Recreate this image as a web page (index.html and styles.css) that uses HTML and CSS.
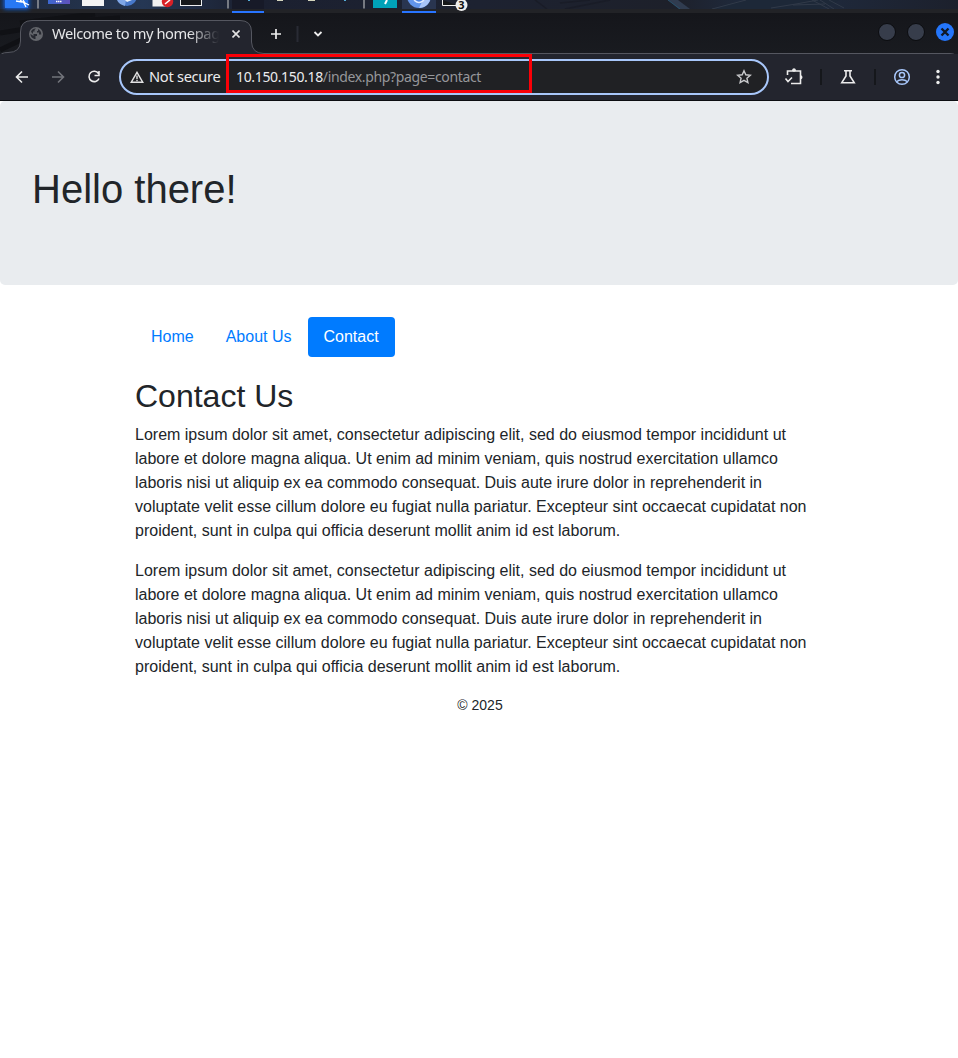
FILE: index.html
```
<!DOCTYPE html>
<html lang="en">
<head>
<meta charset="utf-8">
<title>Welcome to my homepage</title>
<link rel="stylesheet" href="styles.css">
</head>
<body>
<div class="screen">
  <header class="browser">
    <svg class="panel" width="958" height="13" viewBox="0 0 958 13">
      <defs>
        <linearGradient id="sky" x1="0" x2="1"><stop offset="0" stop-color="#202a3d"/><stop offset=".15" stop-color="#253754"/><stop offset=".26" stop-color="#1b2030"/><stop offset=".5" stop-color="#1d2231"/><stop offset=".7" stop-color="#1d202a"/><stop offset=".8" stop-color="#202d42"/><stop offset="1" stop-color="#1c202c"/></linearGradient>
        <linearGradient id="violet" x1="0" x2="1"><stop offset="0" stop-color="#3c68d0"/><stop offset="1" stop-color="#6051bc"/></linearGradient>
        <filter id="glow" x="-50%" y="-80%" width="200%" height="260%"><feGaussianBlur stdDeviation="2"/></filter>
      </defs>
      <rect width="958" height="13" fill="url(#sky)"/>
      <path d="M535 0l12 9M560 3l30-3M565 9l45-9" stroke="#191c27" stroke-width="1.500" fill="none"/>
      <path d="M668 0h10l12 9h-11z" fill="#303c50"/><path d="M668 0l12 9" stroke="#28506a"/>
      <path d="M710 9l35-9h95l-20 9z" fill="#1d2838"/>
      <path d="M712 9l34-9M771 8l25-4 22-4M793 5l32-1M812 0l17 9M820 0l14 9M829 0l15 8" stroke="#313a49" fill="none"/>
      <rect x="232" width="32" height="10" fill="#171a28"/><rect x="402" width="34" height="10" fill="#293550"/>
      <rect y="9" width="958" height="4" fill="#222327"/>
      <rect x="4" y="-8" width="25" height="17" fill="#1763e8" filter="url(#glow)"/>
      <rect x="5" y="0" width="23" height="8" fill="#2878f4"/>
      <path d="M20 0l4 3 2 4M23 0l2 3 4 2M16 1l6 1" stroke="#fff" stroke-width="1.300" fill="none"/>
      <path d="M38 0v8.500M228 0v8.500M364 0v8.500" stroke="#8d9096" stroke-width="1.600"/>
      <rect x="48" width="22" height="4" fill="url(#violet)"/><path d="M56 1.500h6" stroke="#fff" stroke-width="1.500" stroke-dasharray="1.500 .5"/>
      <rect x="82" width="22" height="6" fill="#f3f3f3"/>
      <circle cx="127" cy="-4" r="10" fill="#4778ca"/><path d="M117 0h9l-1 6c-4-1-7-3-8-6z" fill="#7fa7e8"/><path d="M125 0l2 2 5-2z" fill="#e9eff8"/>
      <rect x="152.500" width="15" height="6.500" fill="#f1f1f1"/><circle cx="167.500" cy="1.500" r="5.700" fill="#d82027"/><path d="M165 4l5-4" stroke="#fff" stroke-width="1.600"/>
      <rect x="180.500" y="-5" width="21" height="10.500" fill="#17191b" stroke="#eee"/>
      <path d="M248 .5h2M344 .5h2" stroke="#55acd8"/><path d="M277 .5h6M308 .5h7" stroke="#d4d5bd"/>
      <rect x="373" width="24" height="8" fill="#00a2b9"/><path d="M387 0l-2 4" stroke="#fff" stroke-width="2"/>
      <circle cx="419" cy="-4" r="12" fill="#6295ec"/><path d="M419 8c6 0 10-4 11-8h-7z" fill="#a9c5f8"/><circle cx="419" cy="-3" r="5.500" fill="#4e83df" stroke="#e1ebff" stroke-width="1.500"/>
      <path d="M442.500 0v5.500H458" stroke="#eee" fill="#151719"/>
      <path d="M232 12h32M402 12h34" stroke="#2874ff" stroke-width="2"/>
      <circle cx="461.500" cy="5" r="6" fill="#eee"/><text class="badge-number" x="461.500" y="9" text-anchor="middle">3</text>
    </svg>
    <div class="tabstrip">
      <svg class="frame" width="958" height="41" viewBox="0 0 958 41">
        <path d="M0 20L75 8l45-3M20 10L95 1M0 37l25-12" stroke="#101115" stroke-width="5" fill="none"/>
        <path d="M0 47v-3Q0 39.500 8 39.500 20.500 39.500 20.500 28V19Q20.500 7.500 32 7.500h208Q251.500 7.500 251.500 19v10Q252 40.500 264 40.500H950Q958 41 958 46" fill="#23252e" stroke="#555760"/>
      </svg>
      <div class="tab">
        <svg width="14" height="14" viewBox="0 0 14 14"><circle cx="7" cy="7" r="7" fill="#63656b"/><path d="M7 1.500L5.500 3v1.500H4V7h4v2H6.500v3C3.500 12 1.500 9.500 1.500 7l3 2V7L2 5c.5-2 2-3.500 5-3.500zM9 2c2 1 3.500 3 3.300 5.500H10V5.500H8V4h1z" fill="#272931"/></svg>
        <span class="tab-title">Welcome to my homepage</span>
        <svg class="tab-close" width="8" height="8" viewBox="0 0 8 8"><path d="M.5.500l7 7M7.500.500l-7 7" stroke="#e4e4e4" stroke-width="1.600"/></svg>
      </div>
      <svg class="new-tab" width="60" height="18" viewBox="0 0 60 18"><path d="M6 4v10M1 9h10" stroke="#eee" stroke-width="1.700"/><path d="M27.500 1v16" stroke="#292b34" stroke-width="2"/><path d="M44.500 7l3.500 3.500L51.500 7" stroke="#eee" stroke-width="1.800" fill="none"/></svg>
      <svg class="window-controls" width="78" height="20" viewBox="0 0 78 20"><g fill="#373d4b" stroke="#0b0c0f"><circle cx="10" cy="10" r="8.500"/><circle cx="39" cy="10" r="8.500"/></g><circle cx="68" cy="10" r="9" fill="#2476fb"/><path d="M64.500 6.500l7 7M71.500 6.500l-7 7" stroke="#101828" stroke-width="2.400"/></svg>
    </div>
    <div class="toolbar">
      <svg class="nav-icons" width="90" height="16" viewBox="0 0 90 16" fill="none" stroke-width="1.600"><path d="M14 8H3M8 2.500L2.500 8 8 13.500" stroke="#ececec"/><path d="M38 8h11M44 2.500L49.500 8 44 13.500" stroke="#72747b"/><path d="M84.500 4.500A5.200 5.200 0 1 0 85 9.500M85 2v4.500h-4.500" stroke="#ececec"/></svg>
      <div class="address">
        <svg width="14" height="12" viewBox="0 0 14 12"><path d="M7 1.300L12.800 11.300H1.200z" fill="none" stroke="#e2e2e2" stroke-width="1.400"/><path d="M7 4.500v3.500M7 8.800v1.400" stroke="#e2e2e2" stroke-width="1.400"/></svg>
        <span class="security">Not secure</span>
        <span class="url">10.150.150.18<span class="path">/index.php?page=contact</span></span>
        <svg class="star" width="16" height="16" viewBox="0 0 16 16"><path d="M8 1.800l1.800 4 4.500.4-3.400 3 1 4.400L8 11.300l-3.900 2.300 1-4.400-3.400-3 4.500-.4z" fill="none" stroke="#c8c9cb" stroke-width="1.400"/></svg>
      </div>
      <svg class="actions" width="174" height="20" viewBox="0 0 174 20" fill="none" stroke="#ececec" stroke-width="1.600">
        <path d="M3.500 8V4H16.500V16.500H7M1.500 11.500L4 14.500 8 10.500"/><path d="M8 4a2 2 0 0 1 4 0zM16.500 8.200a2 2 0 0 1 0 4z" fill="#ececec" stroke="none"/><circle cx="10" cy="3" r="1.700" fill="#ececec" stroke="none"/>
        <path d="M37 2v16M91 2v16" stroke="#15171b" stroke-width="2"/>
        <path d="M60 3.800h8M62 4v5l-4.200 6.700h12.400L66 9V4"/>
        <g stroke="#a8c7fa" stroke-width="1.500"><circle cx="118" cy="10" r="7.300"/><circle cx="118" cy="8" r="2.600"/><path d="M112.500 14.800c3-2.700 8-2.700 11 0"/></g>
        <g fill="#eee" stroke="none"><circle cx="154" cy="4.500" r="1.700"/><circle cx="154" cy="10" r="1.700"/><circle cx="154" cy="15.500" r="1.700"/></g>
      </svg>
    </div>
    <div class="highlight"></div>
  </header>
  <main class="page">
    <div class="jumbotron"><h1>Hello there!</h1></div>
    <div class="container">
      <nav class="pills"><a>Home</a><a>About Us</a><a class="active">Contact</a></nav>
      <h2>Contact Us</h2>
      <p>Lorem ipsum dolor sit amet, consectetur adipiscing elit, sed do eiusmod tempor incididunt ut labore et dolore magna aliqua. Ut enim ad minim veniam, quis nostrud exercitation ullamco laboris nisi ut aliquip ex ea commodo consequat. Duis aute irure dolor in reprehenderit in voluptate velit esse cillum dolore eu fugiat nulla pariatur. Excepteur sint occaecat cupidatat non proident, sunt in culpa qui officia deserunt mollit anim id est laborum.</p>
      <p>Lorem ipsum dolor sit amet, consectetur adipiscing elit, sed do eiusmod tempor incididunt ut labore et dolore magna aliqua. Ut enim ad minim veniam, quis nostrud exercitation ullamco laboris nisi ut aliquip ex ea commodo consequat. Duis aute irure dolor in reprehenderit in voluptate velit esse cillum dolore eu fugiat nulla pariatur. Excepteur sint occaecat cupidatat non proident, sunt in culpa qui officia deserunt mollit anim id est laborum.</p>
      <footer>© 2025</footer>
    </div>
  </main>
</div>
</body>
</html>
```

FILE: styles.css
```
* { box-sizing: border-box; }
body { margin: 0; background: #fff; color: #212529; font: 16px/1.5 "Liberation Sans", Arial, sans-serif; }
.screen { width: 958px; height: 1058px; overflow: hidden; }
svg { display: block; flex: none; }
.browser { position: relative; height: 101px; font-family: "Noto Sans", sans-serif; }
.badge-number { font: bold 11px "Noto Sans", sans-serif; fill: #111; }
.tabstrip { position: relative; display: flex; height: 41px; background: linear-gradient(#15161b, #191b20); }
.frame { position: absolute; left: 0; top: 0; }
.tab { position: relative; display: flex; align-items: center; width: 212px; height: 27px; margin: 7px 0 0 29px; }
.tab-title { width: 167px; margin-left: 9px; padding-bottom: 2px; overflow: hidden; white-space: nowrap; font-size: 14.67px; letter-spacing: -.4px; line-height: 22px; color: #e5e6e8; -webkit-mask-image: linear-gradient(to right, #000 82%, transparent); mask-image: linear-gradient(to right, #000 82%, transparent); }
.tab-close { margin-left: 13px; }
.new-tab { position: relative; margin: 12px 0 0 29px; }
.window-controls { position: relative; margin: 9px 3px 0 auto; }
.toolbar { display: flex; align-items: center; height: 47px; padding: 0 0 1px 14px; background: #23252e; border-bottom: 1px solid #0c0d11; }
.nav-icons { margin-right: 15px; }
.address { display: flex; align-items: center; width: 650px; height: 36px; padding: 0 15px 0 9px; border: 2px solid #a8c7fa; border-radius: 18px; background: #202124; color: #ececee; font-size: 14px; letter-spacing: -.35px; line-height: 20px; white-space: nowrap; }
.security { width: 87px; margin-left: 5px; padding-bottom: 2px; font-size: 14.67px; letter-spacing: -.3px; }
.path { color: #96979a; }
.star { margin-left: auto; }
.actions { margin-left: 15px; }
.highlight { position: absolute; left: 226px; top: 54px; width: 306px; height: 39px; border: 3px solid #fb0007; }
.jumbotron { height: 184px; padding: 64px 32px; margin-bottom: 32px; background: #e9ecef; border-radius: 5px; }
h1, h2 { margin: 0 0 8px; font-weight: 400; line-height: 1.2; }
h1 { font-size: 40px; }
h2 { font-size: 32px; }
.container { width: 720px; margin-left: 120px; padding: 0 15px; }
.pills { display: flex; margin-bottom: 20px; }
.pills a { padding: 8px 16px; color: #007bff; border-radius: 4px; }
.pills .active { color: #fff; background: #007bff; }
p { margin: 0 0 16px; }
footer { font-size: 14px; line-height: 21px; text-align: center; }
```
